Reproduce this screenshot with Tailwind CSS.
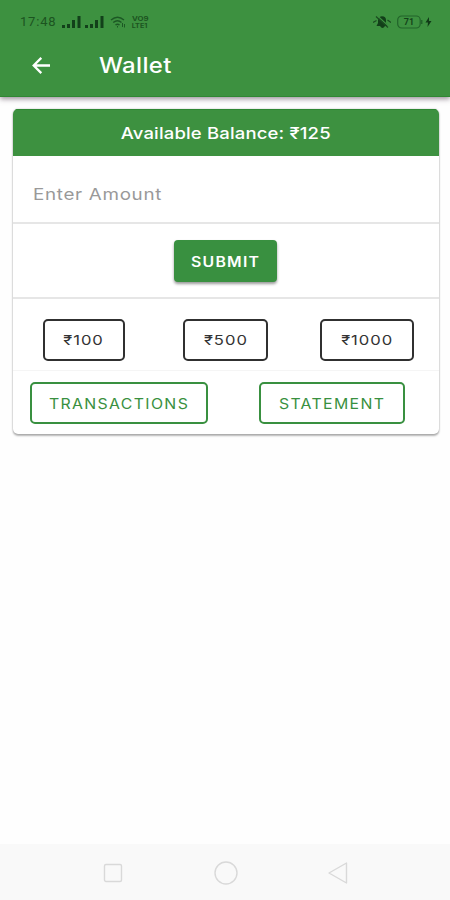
<!DOCTYPE html>
<html lang="en">
<head>
<meta charset="utf-8">
<title>Wallet</title>
<script src="https://cdn.jsdelivr.net/npm/@tailwindcss/browser@4"></script>
</head>
<body class="bg-white">
<div class="w-[450px] h-[900px] flex flex-col overflow-hidden bg-[#fefefe] font-['Inter','Noto_Sans',sans-serif] whitespace-nowrap">
  <header class="h-[97px] shrink-0 bg-[#3d9140] border-b border-[#2f8733] shadow-[0_2px_5px_rgba(60,40,60,0.5)]">
    <div class="h-[43px] pl-5 pr-[18px] flex items-center justify-between text-[#1c5420]">
      <div class="flex items-center">
        <span class="w-[42px] text-[13px] leading-none tracking-[0.8px] font-['Roboto',sans-serif]">17:48</span>
        <svg class="w-[19px] h-[12px]" viewBox="0 0 19 12" fill="#12401a"><path d="M0 9h3v3H0zM5 8h3v4H5zM10 4h3v8h-3zM15.500 0h3v12h-3z"/></svg>
        <svg class="w-[19px] h-[12px] ml-1" viewBox="0 0 19 12" fill="#12401a"><path d="M0 9h3v3H0zM5 8h3v4H5zM10 4h3v8h-3zM15.500 0h3v12h-3z"/></svg>
        <svg class="w-[16px] h-[12px] ml-[6px]" viewBox="0 0 16 12" fill="none" stroke="#1c5824" stroke-width="1.400"><path d="M1 4Q7.500-1.500 14 4M3.200 6.500Q7.500 3 11.500 6.500M5.500 9Q7.500 7.300 9.500 9"/><path d="M7.500 10v1.500M12.500 7v4M14.500 8v3.500" stroke-width="1"/></svg>
        <span class="ml-[5px] w-[18px] pt-px flex flex-col items-center text-[6px] leading-[7px] font-bold"><span class="h-[7px] scale-x-[1.300]">VO9</span><span class="h-[7px] scale-x-[1.200]">LTE1</span></span>
      </div>
      <div class="flex items-center">
        <svg class="w-[18px] h-[14px]" viewBox="0 0 18 14"><path d="M3.500 11L5 8V5Q6 1.500 9 1.200Q13 1.500 13 5v3l2 3zM7 11h5q-2.500 4-5 0z" fill="#123f19"/><path d="M4 .5l12 11" stroke="#3d9140" stroke-width="1.200"/><path d="M3 1.500l12 11M0 7.500l3.500-2M14.500 5l3.500 2.500" stroke="#1a4b20" stroke-width="1.200"/></svg>
        <svg class="w-[26px] h-[14px] ml-[6px]" viewBox="0 0 26 14"><rect x=".7" y="1" width="22.500" height="12" rx="4" fill="none" stroke="#22642a" stroke-width="1.200"/><path d="M24.700 5v4" stroke="#22642a" stroke-width="1.500"/><text x="12" y="10.200" text-anchor="middle" font-size="9" font-weight="600" font-family="Roboto, sans-serif" fill="#123f19">71</text></svg>
        <svg class="w-[7px] h-[10px] ml-[2px]" viewBox="0 0 7 10"><path d="M4 0L.5 5.500H3L2.500 10L6.500 4H4z" fill="#103a17"/></svg>
      </div>
    </div>
    <div class="h-[45px] flex items-center pl-[32px] text-white">
      <svg class="w-[18px] h-[17px]" viewBox="0 0 18 17" fill="none" stroke="currentColor" stroke-width="2.300"><path d="M18 8.500H1.800M9.300 .9L1.700 8.500l7.600 7.600"/></svg>
      <h1 class="ml-[49px] origin-left scale-x-[1.14] text-[21px] leading-none font-medium tracking-[0.3px]">Wallet</h1>
    </div>
  </header>

  <main class="flex-1 pt-3 pl-[12.500px]">
    <section class="w-[426px] h-[325px] rounded-[5px] bg-white overflow-hidden flex flex-col shadow-[0_2px_2px_rgba(0,0,0,0.28),0_0_2px_rgba(0,0,0,0.25)]">
      <div class="h-[47px] shrink-0 flex items-center justify-center bg-[#3d9140] border-t border-[#2f8733] text-white text-[16.500px] font-medium tracking-[0.150px]"><span class="inline-block scale-x-[1.120]">Available Balance: ₹125</span></div>
      <div class="h-[68px] shrink-0 border-b-2 border-[#e6e6e6] flex items-center pl-[20.500px] pt-[11px] text-[16.500px] tracking-[0.6px] text-[#999]"><span class="inline-block origin-left scale-x-[1.140]">Enter Amount</span></div>
      <div class="h-[75px] shrink-0 border-b-2 border-[#e6e6e6] flex justify-center pt-[16px]">
        <button class="w-[103px] h-[42px] rounded-[4px] bg-[#399040] text-white text-[14px] font-semibold tracking-[1.100px] shadow-[0_2px_3px_rgba(0,0,0,0.4)]"><span class="inline-block scale-x-[1.130]">SUBMIT</span></button>
      </div>
      <div class="h-[72px] shrink-0 border-b border-[#f5f5f5] flex pl-[30.500px] pt-5 text-[13.500px] text-[#333] tracking-[0.8px]">
        <button class="w-[82px] h-[42px] rounded-[5px] border-2 border-[#303030]"><span class="inline-block scale-x-[1.230]">₹100</span></button>
        <button class="ml-[58px] w-[85px] h-[42px] rounded-[5px] border-2 border-[#303030]"><span class="inline-block scale-x-[1.230]">₹500</span></button>
        <button class="ml-[52px] w-[94px] h-[42px] rounded-[5px] border-2 border-[#303030]"><span class="inline-block scale-x-[1.230]">₹1000</span></button>
      </div>
      <div class="flex-1 flex pl-[17.500px] pt-[11px] text-[14px] text-[#399040] tracking-[1.200px]">
        <button class="w-[178px] h-[42px] rounded-[5px] border-2 border-[#399040]"><span class="inline-block scale-x-[1.130]">TRANSACTIONS</span></button>
        <button class="ml-[51px] w-[146px] h-[42px] rounded-[5px] border-2 border-[#399040]"><span class="inline-block scale-x-[1.130]">STATEMENT</span></button>
      </div>
    </section>
  </main>

  <nav class="h-[56px] shrink-0 bg-[#f9f9f9] flex items-center pt-px pl-[103px]">
    <svg class="w-5 h-6" viewBox="0 0 20 24" fill="none" stroke="#d9d9d9" stroke-width="1.400"><rect x="1.500" y="3.500" width="17" height="17" rx="1.500"/></svg>
    <svg class="w-6 h-6 ml-[91px]" viewBox="0 0 24 24" fill="none" stroke="#d9d9d9" stroke-width="1.400"><circle cx="12" cy="12" r="11"/></svg>
    <svg class="w-5 h-6 ml-[90px]" viewBox="0 0 20 24" fill="none" stroke="#d9d9d9" stroke-width="1.400" stroke-linejoin="round"><path d="M18.500 2v20L1 12z"/></svg>
  </nav>
</div>
</body>
</html>
